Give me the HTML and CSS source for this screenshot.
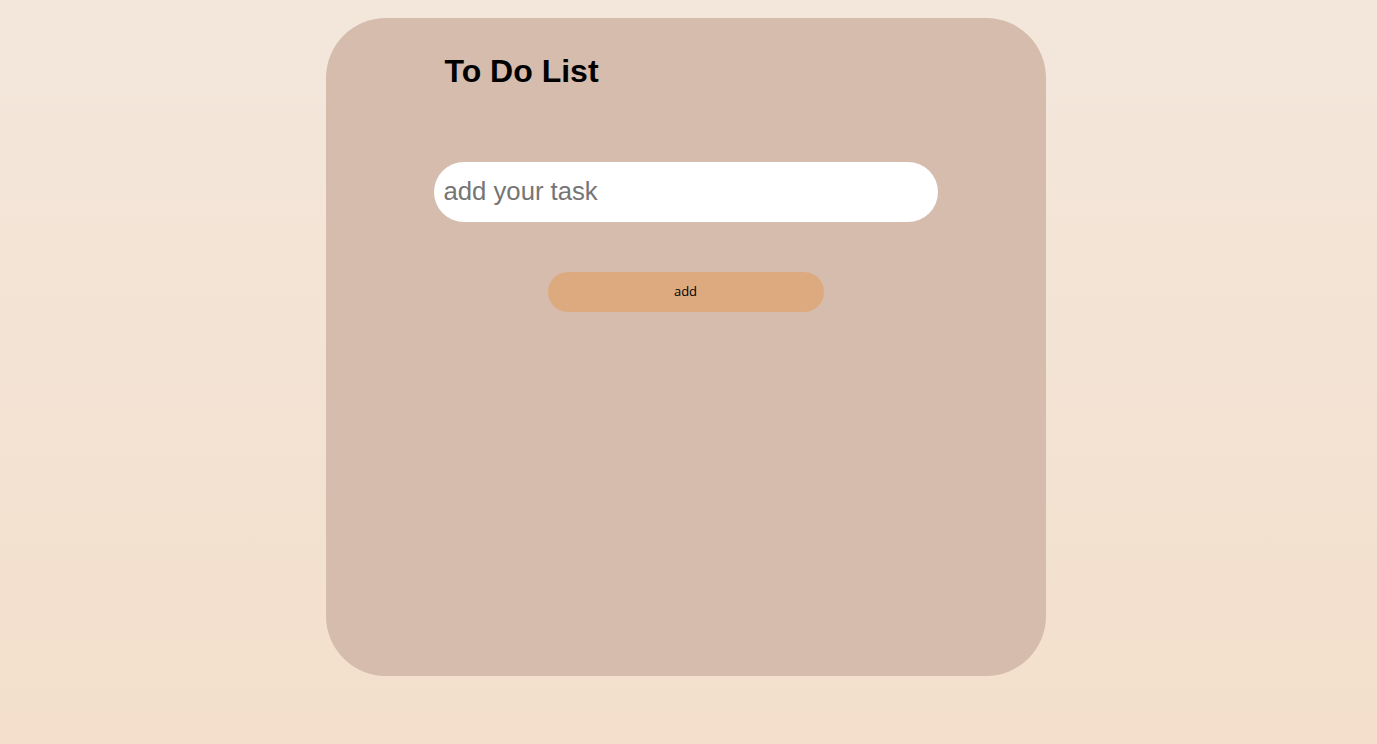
FILE: index.html
```html
<!DOCTYPE html>
<html>
<head>
<meta charset="utf-8">
<title>To Do List</title>
<link rel="stylesheet" href="styles.css">
</head>
<body>
<div class="card">
  <h1 class="title">To Do List</h1>
  <div class="form">
    <input class="task-input" type="text" placeholder="add your task">
    <button class="add-btn">add</button>
  </div>
</div>
</body>
</html>
```

FILE: styles.css
```css
html, body {
  margin: 0;
  padding: 0;
  height: 100%;
}
body {
  background: linear-gradient(to bottom, #f3e7dc, #f3dfcb);
  font-family: "Liberation Sans", Arial, sans-serif;
  display: flex;
  justify-content: center;
  padding: 18px 6px 0 0;
  box-sizing: border-box;
}
.card {
  width: 720px;
  height: 658px;
  background: #d6bcad;
  border-radius: 60px;
  box-sizing: border-box;
  padding: 35px 0 0 0;
  display: flex;
  flex-direction: column;
}
.title {
  margin: 0 0 0 119px;
  font-size: 32px;
  font-weight: bold;
  line-height: 37px;
  color: #000;
}
.form {
  display: flex;
  flex-direction: column;
  align-items: center;
  margin-top: 72px;
  gap: 50px;
}
.task-input {
  width: 504px;
  height: 60px;
  box-sizing: border-box;
  border: none;
  border-radius: 30px;
  background: #fff;
  padding: 0 10px 2px 10px;
  font-family: "Liberation Sans", Arial, sans-serif;
  font-size: 25.7px;
  outline: none;
}
.task-input::placeholder {
  color: #757575;
}
.add-btn {
  width: 276px;
  height: 40px;
  border: none;
  border-radius: 20px;
  background: #ddaa80;
  padding: 0 0 2px 0;
  font-family: "Open Sans", "Noto Sans", sans-serif;
  font-size: 13px;
  color: #000;
  cursor: pointer;
}
```
